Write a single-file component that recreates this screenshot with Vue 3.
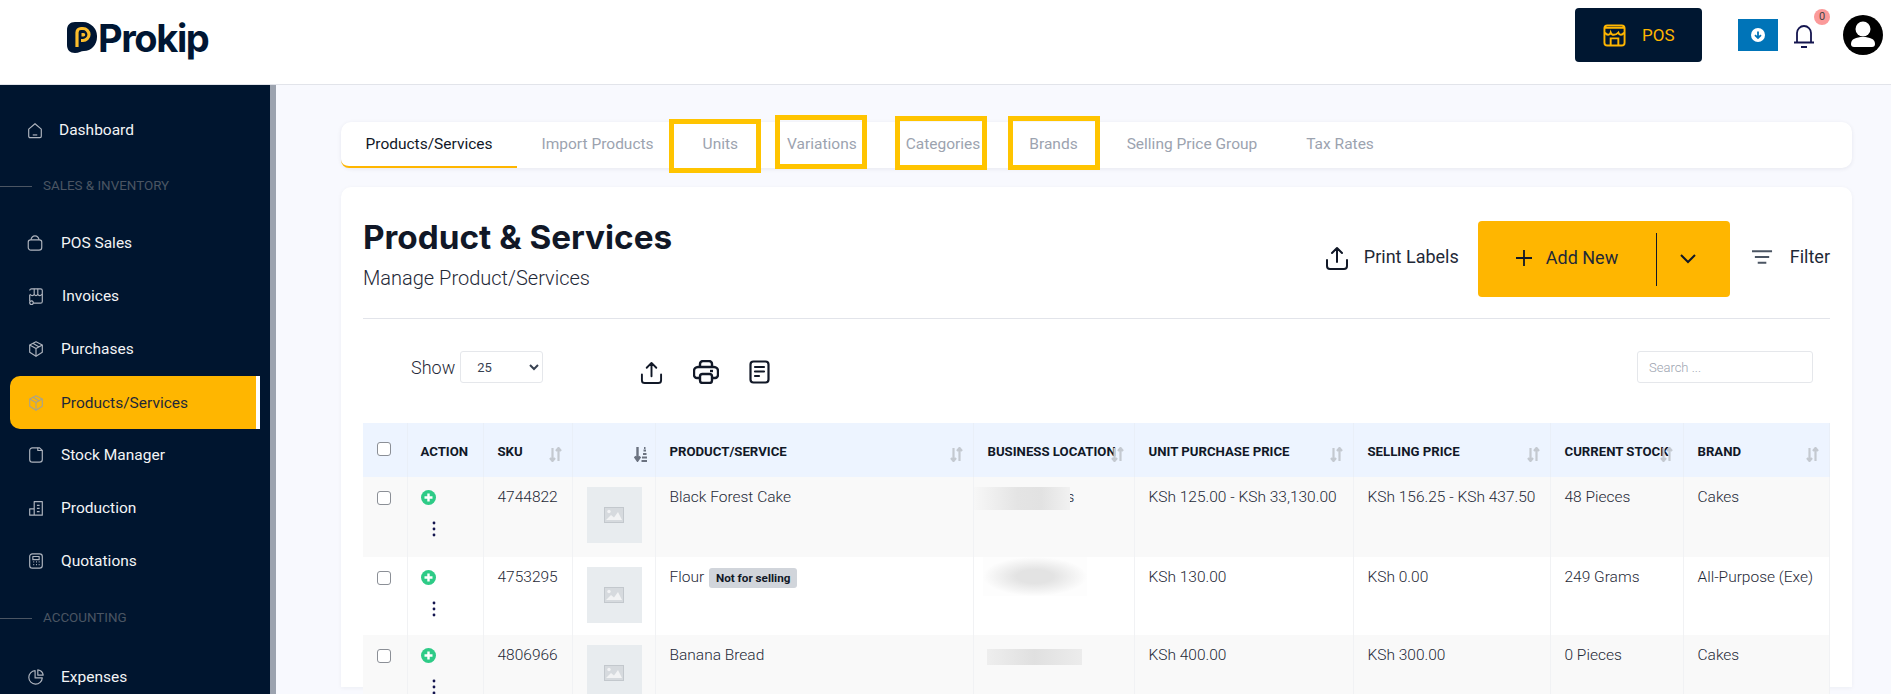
<template>
  <div class="page">
    <header class="topbar">
      <div class="brand">
        <svg class="brand-mark" viewBox="0 0 30 31">
          <path d="M8 0h8a14.500 14.500 0 0 1 14 15c0 8-6 14-13 14-3 0-5 2-9 2-5 0-8-3-8-8V8c0-5 3-8 8-8z" fill="#001633" />
          <path d="M10 25V10.500a4 4 0 0 1 4-4h2a6 6 0 0 1 0 12h-2" fill="none" stroke="#fbbd2c" stroke-width="3.200" />
          <path d="M14.500 14.500V11h2a1.700 1.700 0 0 1 0 3.500z" fill="#fbbd2c" />
        </svg>
        <span class="brand-name">Prokip</span>
      </div>
      <div class="top-actions">
        <button class="pos-btn">
          <svg viewBox="0 0 24 24" fill="none" stroke="#ffb600" stroke-width="2">
            <rect x="1.500" y="1.500" width="21" height="21" rx="3" />
            <path d="M2 9c2 3 5 3 6 0 1 3 5 3 8 0 1 3 4 3 6 0M2 4h20M8 22v-7h8v7" />
          </svg>
          POS
        </button>
        <button class="download-btn">
          <svg viewBox="0 0 14 14">
            <circle cx="7" cy="7" r="7" fill="#fff" />
            <path d="M7 3.500v6.500M4 7.200L7 10l3-2.800" fill="none" stroke="#0074b8" stroke-width="1.800" />
          </svg>
        </button>
        <div class="bell">
          <svg viewBox="0 0 22 24" fill="none" stroke="#14154f" stroke-width="1.800">
            <path d="M4 18V9a7 7 0 0 1 14 0v9M1 18.500h20" />
            <path d="M8 23h6" stroke-width="2" />
          </svg>
          <span class="bell-count">0</span>
        </div>
        <svg class="avatar" viewBox="0 0 40 40">
          <circle cx="20" cy="20" r="20" fill="#000" />
          <circle cx="20" cy="14" r="7.500" fill="#fff" />
          <path d="M8 29c0-5 5-7 12-7s12 2 12 7c0 2-1 3-3 3H11c-2 0-3-1-3-3z" fill="#fff" />
        </svg>
      </div>
    </header>

    <div class="body">
      <aside class="sidebar">
        <template v-for="item in nav" :key="item.label">
          <div v-if="item.section" class="section" :class="item.cls">
            <span class="section-line"></span>
            <span>{{ item.label }}</span>
          </div>
          <a v-else class="nav-item" :class="{ active: item.active }" :style="{ paddingLeft: item.left + 'px' }">
            <svg class="nav-icon" viewBox="0 0 20 20" fill="none" stroke="currentColor" stroke-width="1.300" stroke-linejoin="round">
              <path v-for="d in item.icon" :key="d" :d="d" />
            </svg>
            <span :style="{ left: item.text + 'px' }" class="nav-label">{{ item.label }}</span>
          </a>
        </template>
      </aside>
      <div class="scrollbar"></div>

      <main class="main">
        <nav class="tabs">
          <a v-for="tab in tabs" :key="tab" class="tab" :class="{ current: tab === 'Products/Services' }">{{ tab }}</a>
          <span v-for="box in boxes" :key="box.x" class="callout" :style="{ left: box.x + 'px', top: box.y + 'px' }"></span>
        </nav>

        <section class="card">
          <div class="card-head">
            <div class="heading">
              <h1>Product &amp; Services</h1>
              <p>Manage Product/Services</p>
            </div>
            <div class="head-actions">
              <button class="plain-btn print-btn">
                <svg viewBox="0 0 24 24" fill="none" stroke="#111827" stroke-width="2" stroke-linecap="round" stroke-linejoin="round">
                  <path d="M2 14v6a3 3 0 0 0 3 3h14a3 3 0 0 0 3-3v-6M12 16V2M7 7l5-5 5 5" />
                </svg>
                Print Labels
              </button>
              <div class="add-btn">
                <span class="add-main">
                  <svg viewBox="0 0 16 16" stroke="#111827" stroke-width="1.800"><path d="M8 0v16M0 8h16" /></svg>
                  Add New
                </span>
                <span class="add-more">
                  <svg viewBox="0 0 16 10" fill="none" stroke="#111827" stroke-width="2"><path d="M1 1l7 7 7-7" /></svg>
                </span>
              </div>
              <button class="plain-btn filter-btn">
                <svg viewBox="0 0 22 16" stroke="#4b5563" stroke-width="2"><path d="M0 2h21M3 8h15M6 14h9" /></svg>
                Filter
              </button>
            </div>
          </div>

          <div class="toolbar">
            <label class="show">
              Show
              <select class="page-size">
                <option>25</option>
              </select>
            </label>
            <div class="tools">
              <svg class="tool-upload" viewBox="0 0 24 24" fill="none" stroke="#111827" stroke-width="2" stroke-linecap="round" stroke-linejoin="round">
                <path d="M2 14v6a3 3 0 0 0 3 3h14a3 3 0 0 0 3-3v-6M12 16V2M7 7l5-5 5 5" />
              </svg>
              <svg class="tool-print" viewBox="0 0 26 24" fill="none" stroke="#111827" stroke-width="2.400" stroke-linejoin="round">
                <path d="M7 7V4a3 3 0 0 1 3-3h6a3 3 0 0 1 3 3v3M7 18H4a3 3 0 0 1-3-3v-4a4 4 0 0 1 4-4h16a4 4 0 0 1 4 4v4a3 3 0 0 1-3 3h-3" />
                <rect x="7" y="14" width="12" height="9" rx="2.500" />
                <path d="M17 11h3" />
              </svg>
              <svg class="tool-note" viewBox="0 0 21 24" fill="none" stroke="#111827" stroke-width="2.200" stroke-linecap="round">
                <rect x="1.500" y="1.500" width="18" height="21" rx="3" />
                <path d="M6 7h9M6 11.500h9M6 16h4" />
              </svg>
            </div>
            <input class="search" type="text" placeholder="Search ..." />
          </div>

          <table class="products">
            <colgroup>
              <col v-for="w in colWidths" :key="w" :style="{ width: w + 'px' }" />
            </colgroup>
            <thead>
              <tr>
                <th><input class="check" type="checkbox" /></th>
                <th v-for="col in columns" :key="col.name">
                  {{ col.name }}
                  <svg v-if="col.sort" class="sort" :class="{ dark: col.dark }" viewBox="0 0 13 15" fill="none" stroke="currentColor" stroke-width="2.200">
                    <template v-if="col.dark">
                      <path d="M3.500 0v13M0.800 9.500l2.700 4 2.700-4" stroke-width="2.400" />
                      <path d="M7.500 14h6M8 10.500h5M9 7h3.500M9.500 3.500h2.500M10 0.800h1.500" stroke-width="2.200" />
                    </template>
                    <template v-else>
                      <path d="M3.500 1v13M1 11l2.500 3L6 11M9.500 14V1M7 4l2.500-3L12 4" />
                    </template>
                  </svg>
                </th>
              </tr>
            </thead>
            <tbody>
              <tr v-for="row in rows" :key="row.sku">
                <td><input class="check" type="checkbox" /></td>
                <td>
                  <svg class="expand" viewBox="0 0 15 15">
                    <circle cx="7.500" cy="7.500" r="7.500" fill="#2ecb87" />
                    <path d="M7.500 3.500v8M3.500 7.500h8" stroke="#fff" stroke-width="2.400" />
                  </svg>
                  <svg class="dots" viewBox="0 0 4 16">
                    <circle cx="2" cy="2" r="1.400" /><circle cx="2" cy="8" r="1.400" /><circle cx="2" cy="14" r="1.400" />
                  </svg>
                </td>
                <td>{{ row.sku }}</td>
                <td>
                  <div class="thumb">
                    <svg viewBox="0 0 20 16">
                      <rect x="0.500" y="0.500" width="19" height="15" fill="#d6dade" stroke="#c3c8cd" />
                      <circle cx="5" cy="4.500" r="1.700" fill="#f2f3f4" />
                      <path d="M2 13l5-5 3 2.500 4-5.500 4 8z" fill="#f2f3f4" />
                    </svg>
                  </div>
                </td>
                <td>
                  {{ row.name }}
                  <span v-if="row.badge" class="badge">{{ row.badge }}</span>
                </td>
                <td class="location-cell">
                  <span v-if="row.tail" class="tail">{{ row.tail }}</span>
                  <span class="smudge" :class="row.smudge"></span>
                </td>
                <td>{{ row.purchase }}</td>
                <td>{{ row.selling }}</td>
                <td>{{ row.stock }}</td>
                <td>{{ row.brand }}</td>
              </tr>
            </tbody>
          </table>
        </section>
      </main>
    </div>
  </div>
</template>

<script setup>
const icons = {
  home: ['M3 9l7-6 7 6v8a1.500 1.500 0 0 1-1.500 1.500h-11A1.500 1.500 0 0 1 3 17z', 'M7.500 15.500h5'],
  bag: ['M2.500 9a2.500 2.500 0 0 1 2.500-2.500h10A2.500 2.500 0 0 1 17.500 9v6a3 3 0 0 1-3 3h-9a3 3 0 0 1-3-3z', 'M5.500 6.500C6 3.500 8 2 10 2s4 1.500 4.500 4.500'],
  store: ['M3 4a2 2 0 0 1 2-2h10a2 2 0 0 1 2 2v12a2 2 0 0 1-2 2H7', 'M3 9V16', 'M3 8c2 2 4 2 5 0 1 2 3 2 4 0 1 2 3 2 5 0M8 2v6M12 2v6', 'M5 15.500a2 2 0 1 0 .01 0z'],
  box: ['M10 2l7 3.500v8L10 18l-7-4.500v-8z', 'M3 5.500l7 4 7-4M10 9.500V18M6.500 3.700l7 4'],
  file: ['M3 5a3 3 0 0 1 3-3h8l3 3v10a3 3 0 0 1-3 3H6a3 3 0 0 1-3-3z', 'M12 2v3h5'],
  factory: ['M3 18v-7h5v7zM8 18V3h9v15zM3 18h14', 'M11 7h3M11 10.500h3M11 14h3'],
  calc: ['M3 5a3 3 0 0 1 3-3h8a3 3 0 0 1 3 3v10a3 3 0 0 1-3 3H6a3 3 0 0 1-3-3z', 'M6.500 5h7v3.500h-7zM7 11h1M10 11h1M13 11h1M7 14h1M10 14h1M13 14h1'],
  pie: ['M9 3a7.500 7.500 0 1 0 8 8H9z', 'M12 2a7 7 0 0 1 6 6h-6z']
}

const nav = [
  { label: 'Dashboard', icon: icons.home, left: 26, text: 59 },
  { label: 'SALES & INVENTORY', section: true, cls: 'first' },
  { label: 'POS Sales', icon: icons.bag, left: 26, text: 61 },
  { label: 'Invoices', icon: icons.store, left: 27, text: 62 },
  { label: 'Purchases', icon: icons.box, left: 27, text: 61 },
  { label: 'Products/Services', icon: icons.box, left: 27, text: 61, active: true },
  { label: 'Stock Manager', icon: icons.file, left: 27, text: 61 },
  { label: 'Production', icon: icons.factory, left: 27, text: 61 },
  { label: 'Quotations', icon: icons.calc, left: 27, text: 61 },
  { label: 'ACCOUNTING', section: true, cls: 'second' },
  { label: 'Expenses', icon: icons.pie, left: 27, text: 61 }
]

const tabs = ['Products/Services', 'Import Products', 'Units', 'Variations', 'Categories', 'Brands', 'Selling Price Group', 'Tax Rates']

// yellow annotation boxes drawn over the tab bar, relative to it
const boxes = [
  { x: 328, y: -3 },
  { x: 434, y: -7 },
  { x: 554, y: -6 },
  { x: 667, y: -6 }
]

const colWidths = [44, 76, 89, 83, 318, 161, 219, 197, 133, 146]

const columns = [
  { name: 'ACTION' },
  { name: 'SKU', sort: true },
  { name: '', sort: true, dark: true },
  { name: 'PRODUCT/SERVICE', sort: true },
  { name: 'BUSINESS LOCATION', sort: true },
  { name: 'UNIT PURCHASE PRICE', sort: true },
  { name: 'SELLING PRICE', sort: true },
  { name: 'CURRENT STOCK', sort: true },
  { name: 'BRAND', sort: true }
]

const rows = [
  { sku: '4744822', name: 'Black Forest Cake', purchase: 'KSh 125.00 - KSh 33,130.00', selling: 'KSh 156.25 - KSh 437.50', stock: '48 Pieces', brand: 'Cakes', smudge: 'one', tail: 's' },
  { sku: '4753295', name: 'Flour', badge: 'Not for selling', purchase: 'KSh 130.00', selling: 'KSh 0.00', stock: '249 Grams', brand: 'All-Purpose (Exe)', smudge: 'two' },
  { sku: '4806966', name: 'Banana Bread', purchase: 'KSh 400.00', selling: 'KSh 300.00', stock: '0 Pieces', brand: 'Cakes', smudge: 'three' }
]
</script>

<style>
html, body {
  margin: 0;
  background: #f8f9fe;
}
</style>

<style scoped>
.page {
  width: 1891px;
  height: 694px;
  overflow: hidden;
  font-family: Roboto, "Liberation Sans", sans-serif;
  color: #111827;
  display: flex;
  flex-direction: column;
}

.topbar {
  height: 84px;
  flex: none;
  background: #fff;
  border-bottom: 1px solid #e2e4ea;
  display: flex;
  align-items: center;
  justify-content: space-between;
  padding: 0 8px 0 67px;
}

.brand {
  display: flex;
  align-items: center;
  gap: 1px;
  margin-top: -9px;
}

.brand-mark {
  width: 30px;
  height: 31px;
}

.brand-name {
  font-family: Inter, sans-serif;
  font-weight: 700;
  font-size: 38px;
  line-height: 38px;
  letter-spacing: -1.400px;
  color: #001633;
}

.top-actions {
  display: flex;
  align-items: center;
  margin-top: -14px;
}

.pos-btn {
  width: 127px;
  height: 54px;
  border: none;
  border-radius: 4px;
  background: #001731;
  color: #ffb600;
  font: 400 17px Roboto, sans-serif;
  display: flex;
  align-items: center;
  gap: 16px;
  padding: 0 0 0 28px;
}

.pos-btn svg {
  width: 23px;
  height: 23px;
}

.download-btn {
  width: 40px;
  height: 32px;
  border: none;
  padding: 0;
  margin-left: 36px;
  background: #0074b8;
  display: flex;
  align-items: center;
  justify-content: center;
}

.download-btn svg {
  width: 14px;
  height: 14px;
}

.bell {
  position: relative;
  width: 22px;
  height: 24px;
  margin-left: 15px;
  margin-top: 2px;
}

.bell svg {
  width: 22px;
  height: 24px;
  display: block;
}

.bell-count {
  position: absolute;
  left: 21px;
  top: -15px;
  width: 16px;
  height: 16px;
  border-radius: 50%;
  background: #fb9a9a;
  color: #444;
  font-size: 11px;
  line-height: 16px;
  text-align: center;
}

.avatar {
  width: 40px;
  height: 40px;
  margin-left: 28px;
}

.body {
  flex: 1;
  display: flex;
  min-height: 0;
}

.sidebar {
  width: 270px;
  flex: none;
  background: #00152f;
  padding-top: 18px;
  box-sizing: border-box;
}

.scrollbar {
  width: 6px;
  flex: none;
  background: #9ca3af;
}

.nav-item {
  height: 53px;
  display: flex;
  align-items: center;
  position: relative;
  color: #f3f4f6;
  font-size: 15.500px;
}

.nav-icon {
  width: 18px;
  height: 18px;
  color: #aeb4be;
}

.nav-label {
  position: absolute;
}

.nav-item.active {
  background: #ffb600;
  color: #1f2937;
  margin: 0 10px;
  padding-right: 0;
  border-radius: 10px 0 0 10px;
  border-right: 4px solid #fff;
  margin-top: 1px;
  margin-bottom: -1px;
}

.nav-item.active .nav-icon {
  margin-left: -10px;
  color: #a9a38c;
}

.nav-item.active .nav-label {
  margin-left: -10px;
}

.section {
  display: flex;
  align-items: center;
  gap: 11px;
  color: #4b5563;
  font-size: 13.400px;
  height: 28px;
}

.section.first {
  margin-top: 15px;
  margin-bottom: 17px;
}

.section.second {
  margin-top: 16px;
  margin-bottom: 19px;
}

.section-line {
  width: 32px;
  height: 1px;
  background: #4b5563;
  margin-top: 3px;
}

.main {
  flex: 1;
  min-width: 0;
  padding: 37px 39px 0 65px;
}

.tabs {
  position: relative;
  height: 46px;
  background: #fff;
  border-radius: 10px;
  box-shadow: 0 1px 4px rgba(20, 30, 60, 0.08);
  display: flex;
}

.tab {
  padding: 0 24.500px;
  line-height: 45px;
  font-size: 15.500px;
  color: #9ca3af;
  white-space: nowrap;
}

.tab.current {
  color: #111827;
  border-bottom: 2px solid #ffb600;
  height: 44px;
  border-radius: 0 0 0 8px;
  line-height: 44px;
}

.callout {
  position: absolute;
  width: 92px;
  height: 54px;
  box-sizing: border-box;
  border: 5px solid #ffc400;
}

.card {
  margin-top: 19px;
  background: #fff;
  border-radius: 10px 10px 0 0;
  padding: 0 22px;
  height: 500px;
  box-shadow: 0 1px 4px rgba(20, 30, 60, 0.05);
}

.card-head {
  height: 132px;
  box-sizing: border-box;
  padding-top: 34px;
  border-bottom: 1px solid #e2e4ea;
  display: flex;
  justify-content: space-between;
}

.heading h1 {
  margin: 0;
  font-family: Inter, sans-serif;
  font-weight: 700;
  font-size: 33.300px;
  line-height: 32px;
  color: #111827;
}

.heading p {
  margin: 11px 0 0;
  font-size: 20px;
  font-weight: 300;
  line-height: 28px;
  color: #1f2937;
}

.head-actions {
  display: flex;
  height: 76px;
}

.plain-btn {
  border: none;
  background: none;
  padding: 0 0 5px;
  font: 400 18px Roboto, sans-serif;
  color: #1f2937;
  display: flex;
  align-items: center;
  white-space: nowrap;
}

.print-btn {
  gap: 15px;
  margin-right: 19px;
}

.print-btn svg {
  width: 24px;
  height: 24px;
  margin-top: 2px;
}

.add-btn {
  width: 252px;
  height: 76px;
  border-radius: 4px;
  background: #ffb600;
  display: flex;
  align-items: center;
  font-size: 18px;
  color: #1f2937;
}

.add-main {
  width: 179px;
  height: 53px;
  box-sizing: border-box;
  padding: 0 0 4px 38px;
  border-right: 1px solid #111827;
  display: flex;
  align-items: center;
  gap: 14px;
}

.add-main svg {
  width: 16px;
  height: 16px;
  margin-top: 2px;
}

.add-more {
  flex: 1;
  display: flex;
  justify-content: center;
  padding-right: 10px;
}

.add-more svg {
  width: 16px;
  height: 10px;
}

.filter-btn {
  gap: 17px;
  margin-left: 22px;
}

.filter-btn svg {
  width: 21px;
  height: 16px;
}

.toolbar {
  height: 104px;
  display: flex;
  align-items: flex-start;
  position: relative;
}

.show {
  margin: 32px 0 0 48px;
  display: flex;
  align-items: center;
  gap: 5px;
  font-size: 18px;
  font-weight: 300;
  color: #1f2937;
  height: 32px;
}

.page-size {
  width: 83px;
  height: 32px;
  border: 1px solid #e5e7eb;
  border-radius: 3px;
  background-color: #fff;
  padding-left: 12px;
  font: 400 13px Roboto, sans-serif;
  color: #374151;
}

.tools {
  display: flex;
  align-items: flex-start;
  margin: 42px 0 0 97px;
}

.tool-upload {
  width: 23px;
  height: 23px;
}

.tool-print {
  width: 26px;
  height: 24px;
  margin: -1px 0 0 30px;
}

.tool-note {
  width: 21px;
  height: 24px;
  margin: -1px 0 0 30px;
}

.search {
  margin: 32px 17px 0 auto;
  width: 176px;
  height: 32px;
  box-sizing: border-box;
  border: 1px solid #e5e7eb;
  border-radius: 3px;
  padding: 0 11px;
  font: 300 13px Roboto, sans-serif;
}

.search::placeholder {
  color: #9ca3af;
}

.products {
  width: 1466px;
  table-layout: fixed;
  border-collapse: collapse;
  font-size: 15.500px;
  font-weight: 300;
  color: #1f2937;
}

.products th {
  position: relative;
  height: 54px;
  box-sizing: border-box;
  padding: 2px 14px 0;
  text-align: left;
  background: #edf4ff;
  color: #111827;
  font-size: 13.200px;
  font-weight: 700;
  white-space: nowrap;
  border-right: 1px solid #e9eff8;
}

.products td {
  height: 78px;
  box-sizing: border-box;
  padding: 10px 14px;
  vertical-align: top;
  line-height: 20px;
  white-space: nowrap;
  border-right: 1px solid #f1f2f4;
}

.products th:nth-child(2),
.products td:nth-child(2) {
  padding-left: 13px;
}

.products tbody tr:nth-child(odd) {
  background: #f9f9f9;
}

.products tbody tr:first-child td {
  height: 80px;
}

.check {
  appearance: none;
  display: block;
  margin: 4px 0 0;
  width: 14px;
  height: 14px;
  box-sizing: border-box;
  border: 1.500px solid #8b8f96;
  border-radius: 3px;
  background: #fff;
}

.products th .check {
  margin-top: -4px;
}

.expand {
  display: block;
  width: 15px;
  height: 15px;
  margin-top: 3px;
}

.dots {
  display: block;
  width: 4px;
  height: 16px;
  margin: 16px 0 0 11px;
  fill: #14154f;
}

.thumb {
  width: 55px;
  height: 56px;
  background: #e8ecef;
  display: flex;
  align-items: center;
  justify-content: center;
}

.thumb svg {
  width: 20px;
  height: 16px;
}

.sort {
  position: absolute;
  right: 10px;
  top: 24px;
  width: 13px;
  height: 15px;
  color: #c4c9d0;
}

.sort.dark {
  color: #6b7280;
  right: 8px;
}

.badge {
  display: inline-block;
  margin-left: 1px;
  padding: 0 7px;
  height: 20px;
  line-height: 20px;
  border-radius: 3px;
  background: #d1d5db;
  color: #111827;
  font-size: 11.700px;
  font-weight: 700;
  vertical-align: top;
  margin-top: 1px;
}

.location-cell {
  position: relative;
  overflow: hidden;
}

.tail {
  position: absolute;
  left: 93px;
  top: 10px;
}

.smudge {
  position: absolute;
  display: block;
}

.smudge.one {
  left: 0;
  top: 10px;
  width: 96px;
  height: 23px;
  background: linear-gradient(90deg, #f7f7f7, #e4e4e4 45%, #e2e2e2 70%, #f1f1f1);
}

.smudge.two {
  left: 9px;
  top: 0;
  width: 104px;
  height: 39px;
  background: radial-gradient(closest-side, #e3e3e3 35%, #fdfdfd);
}

.smudge.three {
  left: 13px;
  top: 14px;
  width: 95px;
  height: 16px;
  background: linear-gradient(90deg, #eeeeee, #e0e0e0 50%, #ececec);
}
</style>
